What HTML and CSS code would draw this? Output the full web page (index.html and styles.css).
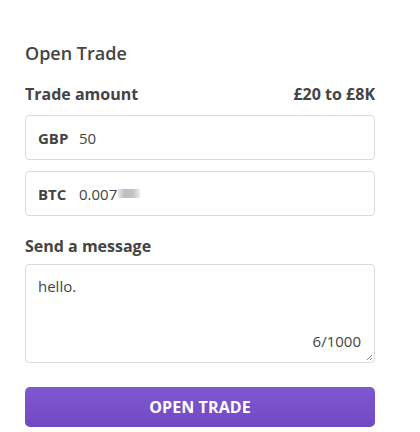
FILE: index.html
```html
<!DOCTYPE html>
<html>
<head>
<meta charset="utf-8">
<link rel="stylesheet" href="styles.css">
</head>
<body>
<div class="panel">
  <h2 class="title">Open Trade</h2>
  <div class="label-row">
    <span class="label">Trade amount</span>
    <span class="range">£20 to £8K</span>
  </div>
  <div class="field">
    <span class="cur">GBP</span>
    <span class="val">50</span>
  </div>
  <div class="field">
    <span class="cur">BTC</span>
    <span class="val">0.007<span class="blur"></span></span>
  </div>
  <div class="label-row msg-label">
    <span class="label">Send a message</span>
  </div>
  <div class="textarea">
    <div class="msg">hello.</div>
    <div class="count">6/1000</div>
    <svg class="grip" width="8" height="8" viewBox="0 0 8 8"><path d="M7 2 L2 7 M7 5 L5 7" stroke="#888" stroke-width="1"/></svg>
  </div>
  <button class="btn">OPEN TRADE</button>
</div>
</body>
</html>
```
FILE: styles.css
```css
html, body { margin: 0; padding: 0; background: #fff; }
body { font-family: "Open Sans", "Liberation Sans", sans-serif; color: #444; }
.panel { padding: 40px 45px 0 25px; }
.title { margin: 0; font-size: 18px; font-weight: 600; line-height: 26px; color: #444; }
.label-row { display: flex; justify-content: space-between; align-items: baseline; margin-top: 17px; }
.label { font-size: 16px; font-weight: 700; line-height: 22px; color: #444; }
.range { font-size: 16px; font-weight: 700; color: #444; }
.field { display: flex; align-items: center; height: 45px; box-sizing: border-box; border: 1px solid #dcdcdc; border-radius: 4px; padding: 0 12px; margin-top: 10px; font-size: 15px; }
.field + .field { margin-top: 11px; }
.cur { font-weight: 700; width: 41px; color: #444; }
.val { color: #444; display: flex; align-items: center; }
.blur { display: inline-block; width: 22px; height: 9px; background: linear-gradient(90deg, #e8e8e8, #bdbdbd 30%, #c4c4c4 70%, #eee); margin-left: 1px; }
.msg-label { margin-top: 19px; }
.textarea { position: relative; height: 99px; box-sizing: border-box; border: 1px solid #dcdcdc; border-radius: 4px; margin-top: 7px; padding: 10px 12px; font-size: 15px; }
.msg { line-height: 22px; }
.count { position: absolute; right: 13px; bottom: 10px; line-height: 22px; }
.grip { position: absolute; right: 1px; bottom: 1px; }
.btn { display: block; width: 100%; height: 40px; margin-top: 24px; border: 0; border-radius: 5px; background: linear-gradient(#7f58d0, #7249c4); color: #fff; font-family: "Open Sans", sans-serif; font-weight: 700; font-size: 16px; letter-spacing: 0.1px; }
```
